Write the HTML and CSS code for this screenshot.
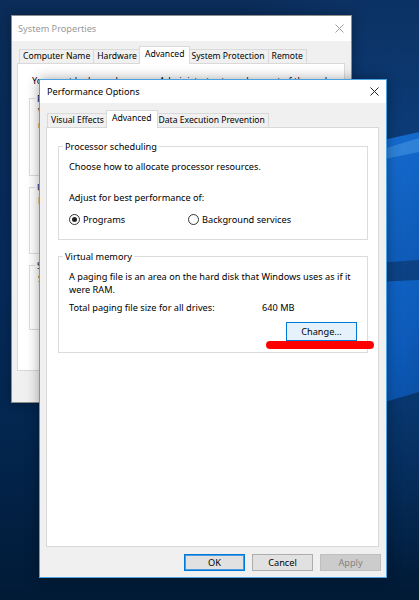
FILE: index.html
```html
<!DOCTYPE html>
<html>
<head>
<meta charset="utf-8">
<link rel="stylesheet" href="styles.css">
</head>
<body>
<div class="desktop">
  <svg class="wallpaper" viewBox="0 0 419 600" preserveAspectRatio="none">
    <defs>
      <linearGradient id="bg" x1="0" y1="0" x2="0" y2="1">
        <stop offset="0" stop-color="#0b2c58"/>
        <stop offset="0.45" stop-color="#062a5a"/>
        <stop offset="0.72" stop-color="#03264f"/>
        <stop offset="1" stop-color="#011a36"/>
      </linearGradient>
      <linearGradient id="pane1" x1="0" y1="0" x2="1" y2="1">
        <stop offset="0" stop-color="#2a82dc"/>
        <stop offset="0.35" stop-color="#156cd0"/>
        <stop offset="1" stop-color="#0d58b4"/>
      </linearGradient>
      <linearGradient id="pane2" x1="0" y1="0" x2="1" y2="1">
        <stop offset="0" stop-color="#1468cc"/>
        <stop offset="0.6" stop-color="#0d5cbc"/>
        <stop offset="1" stop-color="#0a4c9e"/>
      </linearGradient>
      <radialGradient id="glow" cx="0.95" cy="0.42" r="0.55">
        <stop offset="0" stop-color="#0f4f9c" stop-opacity="0.7"/>
        <stop offset="1" stop-color="#0f4f9c" stop-opacity="0"/>
      </radialGradient>
    </defs>
    <rect width="419" height="600" fill="url(#bg)"/>
    <rect width="419" height="600" fill="url(#glow)"/>
    <polygon points="330,152 419,132 419,260 330,266" fill="url(#pane1)"/>
    <polygon points="330,284 419,280 419,392 330,418" fill="url(#pane2)"/>
    <polygon points="380,150 419,138 419,152 380,160" fill="#4a9be6" opacity="0.5"/>
  </svg>

  <div class="window sysprops">
    <div class="titlebar">
      <span class="title">System Properties</span>
      <svg class="close" width="9" height="9" viewBox="0 0 9 9"><path d="M0.5 0.5L8.5 8.5M8.5 0.5L0.5 8.5" stroke="#a0a0a0" stroke-width="1"/></svg>
    </div>
    <div class="winbody">
      <div class="tabs">
        <div class="tab">Computer Name</div>
        <div class="tab">Hardware</div>
        <div class="tab active">Advanced</div>
        <div class="tab">System Protection</div>
        <div class="tab">Remote</div>
      </div>
      <div class="tabpanel sp-panel">
        <p class="intro">You must be logged on as an Administrator to make most of these changes.</p>
        <fieldset class="group sp-group">
          <legend>Performance</legend>
          <p>Visual effects, processor scheduling, memory usage, and virtual memory</p>
          <div class="btnrow"><button class="btn">Settings...</button></div>
        </fieldset>
        <fieldset class="group sp-group">
          <legend>User Profiles</legend>
          <p>Desktop settings related to your sign-in</p>
          <div class="btnrow"><button class="btn">Settings...</button></div>
        </fieldset>
        <fieldset class="group sp-group">
          <legend>Startup and Recovery</legend>
          <p>System startup, system failure, and debugging information</p>
          <div class="btnrow"><button class="btn">Settings...</button></div>
        </fieldset>
        <div class="btnrow env"><button class="btn">Environment Variables...</button></div>
      </div>
      <div class="dlgbuttons sp-buttons">
        <button class="btn dlg">OK</button>
        <button class="btn dlg">Cancel</button>
        <button class="btn dlg">Apply</button>
      </div>
    </div>
  </div>

  <div class="window perfopts">
    <div class="titlebar">
      <span class="title">Performance Options</span>
      <svg class="close" width="9" height="9" viewBox="0 0 9 9"><path d="M0.5 0.5L8.5 8.5M8.5 0.5L0.5 8.5" stroke="#222" stroke-width="1"/></svg>
    </div>
    <div class="winbody">
      <div class="tabs">
        <div class="tab">Visual Effects</div>
        <div class="tab active">Advanced</div>
        <div class="tab">Data Execution Prevention</div>
      </div>
      <div class="tabpanel po-panel">
        <fieldset class="group po-group">
          <legend>Processor scheduling</legend>
          <p class="l1">Choose how to allocate processor resources.</p>
          <p class="l2">Adjust for best performance of:</p>
          <div class="radios">
            <label class="radio first"><span class="dot checked"></span>Programs</label>
            <label class="radio"><span class="dot"></span>Background services</label>
          </div>
        </fieldset>
        <fieldset class="group po-group vm">
          <legend>Virtual memory</legend>
          <p class="l1 nowrap">A paging file is an area on the hard disk that Windows uses as if it<br>were RAM.</p>
          <div class="total"><span class="tlabel">Total paging file size for all drives:</span><span>640 MB</span></div>
          <div class="btnrow change-row"><button class="btn change">Change...</button></div>
        </fieldset>
      </div>
      <div class="dlgbuttons po-buttons">
        <button class="btn dlg ok">OK</button>
        <button class="btn dlg">Cancel</button>
        <button class="btn dlg disabled">Apply</button>
      </div>
    </div>
  </div>

  <div class="redmark"></div>
</div>
</body>
</html>
```

FILE: styles.css
```css
* { box-sizing: border-box; }
html, body { margin: 0; padding: 0; }
body {
  width: 419px;
  height: 600px;
  overflow: hidden;
  font-family: "Noto Sans", "Open Sans", sans-serif;
  font-size: 9.2px;
  line-height: 13px;
  color: #000;
}
p { margin: 0; }
.nowrap { white-space: nowrap; }

.desktop {
  position: relative;
  width: 419px;
  height: 600px;
  overflow: hidden;
  background: #03234a;
}
.wallpaper { position: absolute; left: 0; top: 0; width: 419px; height: 600px; }

.window {
  position: absolute;
  display: flex;
  flex-direction: column;
  background: #f0f0f0;
}
.sysprops {
  left: 11px; top: 15px; width: 341px; height: 388px;
  border: 1px solid #8d8d8d;
  box-shadow: 0 0 10px rgba(0,0,0,0.3);
}
.perfopts {
  left: 39px; top: 79px; width: 348px; height: 499px;
  border: 1px solid #4ba3e3;
  box-shadow: 0 0 12px rgba(0,0,0,0.35);
}

.titlebar {
  flex: none;
  background: #fff;
  display: flex;
  align-items: center;
  justify-content: space-between;
}
.sysprops .titlebar { height: 25px; padding: 0 7px 0 6px; }
.sysprops .title { color: #9a9a9a; }
.perfopts .titlebar { height: 23px; padding: 0 7px 0 7px; }
.close { display: block; }

.winbody {
  flex: 1;
  display: flex;
  flex-direction: column;
  min-height: 0;
}
.sysprops .winbody { padding: 5px 6px 0 5px; }
.perfopts .winbody { padding: 7px 7px 6px 6px; }

.tabs {
  display: flex;
  align-items: flex-end;
  padding-left: 1px;
  margin-bottom: -1px;
  position: relative;
  z-index: 1;
  font-size: 8.6px;
}
.sysprops .tabs { padding-left: 2px; }
.tab {
  height: 14px;
  padding: 0 3px;
  border: 1px solid #d9d9d9;
  border-bottom: none;
  margin-bottom: 1px;
  margin-left: -1px;
  background: #f0f0f0;
  line-height: 13px;
  white-space: nowrap;
}
.tab:first-child { margin-left: 0; }
.tab.active {
  position: relative;
  z-index: 2;
  height: 18px;
  margin: 0 -2px 0 -2px;
  padding: 0 5px;
  background: #fff;
  line-height: 14px;
}

.tabpanel {
  flex: 1;
  background: #fff;
  border: 1px solid #d9d9d9;
  min-height: 0;
}

.group {
  border: 1px solid #dcdcdc;
  margin: 0;
  min-width: 0;
}
.group legend { padding: 0 2px; line-height: 13px; }

/* System properties panel */
.sp-panel { padding: 10px 11px 0 11px; }
.intro { margin-left: 3px; white-space: nowrap; }
.sp-group { margin-top: 5px; padding: 0 10px 7px 8px; }
.sp-group legend { margin-left: -3px; }
.sp-group:nth-of-type(2) { padding-bottom: 9px; }
.sp-group .btnrow { margin-top: 18px; }
.btnrow { display: flex; justify-content: flex-end; }
.env { margin-top: 12px; }

.btn {
  font: inherit;
  color: #000;
  background: #e1e1e1;
  border: 1px solid #adadad;
  height: 19px;
  padding: 0 6px;
  margin: 0;
  line-height: 15px;
}

/* Performance options panel */
.po-panel { padding: 12px 10px 0 11px; }
.po-group { padding: 0 10px 13px 10px; }
.po-group legend { margin-left: -6px; }
.po-group.vm { margin-top: 10px; padding-bottom: 11px; }
.l1 { margin-top: 7px; }
.l2 { margin-top: 18px; }
.radios { display: flex; margin-top: 9px; height: 13px; }
.radio { display: flex; align-items: center; gap: 3px; }
.radio.first { width: 119px; }
.dot {
  width: 11px; height: 11px;
  border: 1px solid #333;
  border-radius: 50%;
  background: #fff;
  display: flex;
  align-items: center;
  justify-content: center;
}
.dot.checked::after {
  content: "";
  width: 5px; height: 5px;
  border-radius: 50%;
  background: #222;
}
.total { display: flex; margin-top: 5px; }
.tlabel { width: 193px; }
.change-row { margin-top: 8px; }
.change {
  width: 71px;
  background: #e5f1fb;
  border-color: #0078d7;
}

.dlgbuttons {
  display: flex;
  justify-content: flex-end;
  gap: 7px;
  flex: none;
}
.sp-buttons { padding: 7px 0 7px; }
.po-buttons { margin-top: 7px; margin-right: -2px; }
.dlg { width: 61px; height: 17px; padding: 0; line-height: 14px; }
.dlg.ok { border: 1px solid #0078d7; box-shadow: inset 0 0 0 1px #4a9be0; }
.dlg.disabled { background: #cccccc; border-color: #bfbfbf; color: #838383; }

.redmark {
  position: absolute;
  left: 266px;
  top: 341px;
  width: 108px;
  height: 8px;
  border-radius: 4px;
  background: #ff0000;
}
```
